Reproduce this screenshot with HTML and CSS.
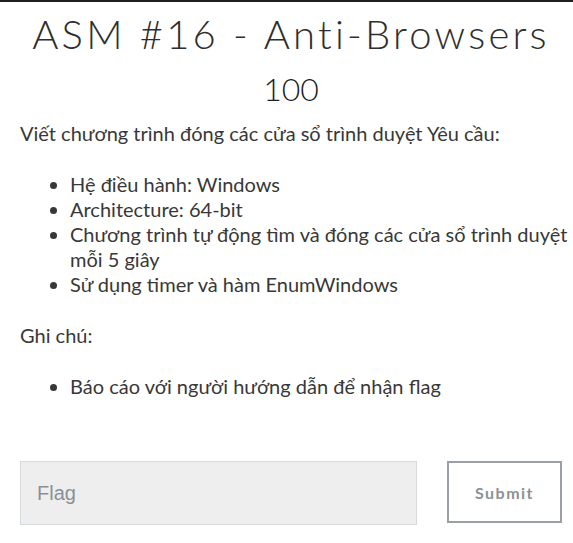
FILE: index.html
```html
<!DOCTYPE html>
<html lang="vi">
<head>
<meta charset="utf-8">
<title>ASM #16 - Anti-Browsers</title>
<link rel="stylesheet" href="styles.css">
</head>
<body>
<div class="modal">
  <div class="head">
    <h1 class="title">ASM #16 - Anti-Browsers</h1>
    <h2 class="value">100</h2>
  </div>
  <div class="desc">
    <p>Viết chương trình đóng các cửa sổ trình duyệt Yêu cầu:</p>
    <ul>
      <li>Hệ điều hành: Windows</li>
      <li>Architecture: 64-bit</li>
      <li>Chương trình tự động tìm và đóng các cửa sổ trình duyệt mỗi 5 giây</li>
      <li>Sử dụng timer và hàm EnumWindows</li>
    </ul>
    <p>Ghi chú:</p>
    <ul>
      <li>Báo cáo với người hướng dẫn để nhận flag</li>
    </ul>
  </div>
  <form class="submit-row">
    <input class="flag-input" type="text" placeholder="Flag">
    <button class="submit-btn" type="button">Submit</button>
  </form>
</div>
</body>
</html>
```
FILE: styles.css
```css
html, body {
  margin: 0;
  padding: 0;
  background: #ffffff;
}
body {
  font-family: "Lato", "Noto Sans", sans-serif;
  color: #383838;
  font-size: 20px;
}
.modal {
  border-top: 2px solid #1f1f1f;
  padding: 0 11px 0 20px;
}
.head {
  text-align: center;
}
.title {
  margin: 0;
  padding-top: 8px;
  font-family: "Lato", sans-serif;
  font-weight: 300;
  font-size: 40px;
  letter-spacing: 3.2px;
  line-height: 48px;
  color: #2e2e2e;
}
.value {
  margin: 0;
  padding-top: 11px;
  font-family: "Lato", sans-serif;
  font-weight: 300;
  font-size: 32px;
  line-height: 40px;
  color: #1e1e1e;
}
.desc {
  padding-top: 12px;
  margin-right: -11px;
  line-height: 25px;
}
.desc p {
  margin: 0 0 26px;
}
.desc ul {
  margin: 0 0 26px;
  padding-left: 50px;
}
.submit-row {
  display: grid;
  grid-template-columns: 397px 1fr;
  gap: 30px;
  margin-top: 62px;
  align-items: start;
}
.flag-input {
  box-sizing: border-box;
  height: 64px;
  margin: 0;
  padding: 0 16px;
  border: 1px solid #d6dadd;
  background: #eeeeee;
  font-family: "Liberation Sans", Arial, sans-serif;
  font-size: 20px;
  color: #333;
  border-radius: 0;
  outline: none;
}
.flag-input::placeholder {
  color: #8a9096;
}
.submit-btn {
  box-sizing: border-box;
  height: 62px;
  margin: 0;
  border: 2px solid #9aa0a6;
  background: #ffffff;
  font-family: "Lato", sans-serif;
  font-weight: 700;
  font-size: 16px;
  letter-spacing: 1.5px;
  color: #8b9196;
  border-radius: 0;
}
```
